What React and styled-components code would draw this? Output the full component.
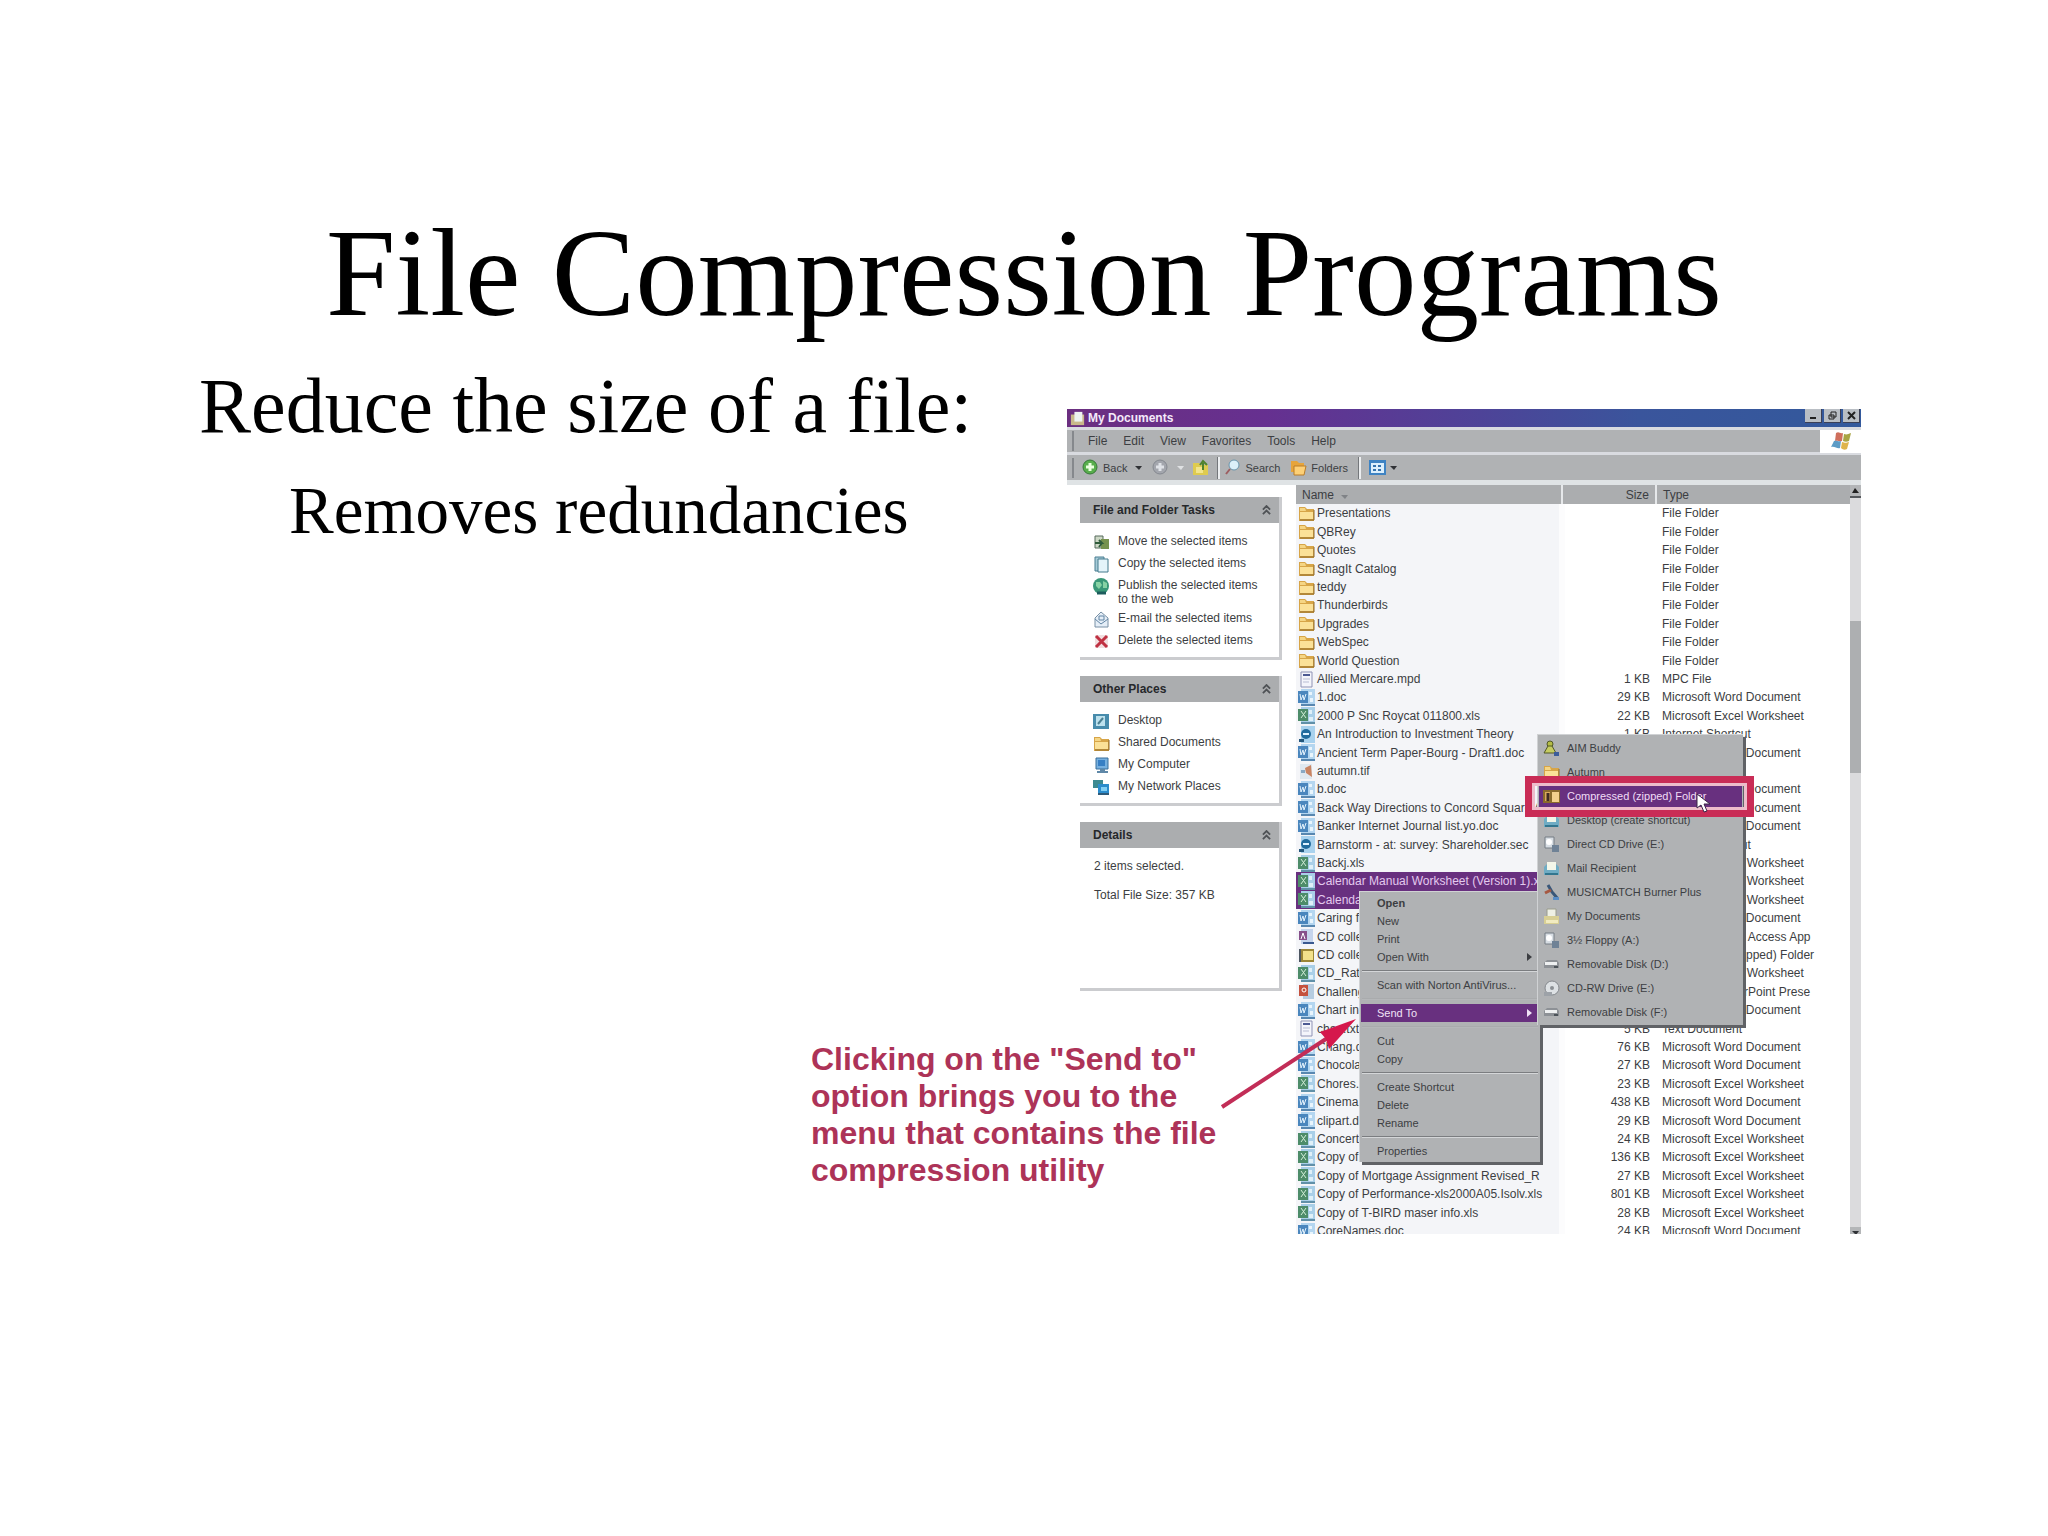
import React from "react";
import styled, { createGlobalStyle, css } from "styled-components";

const GlobalStyle = createGlobalStyle`
  * { box-sizing: border-box; }
  body { margin: 0; background: #fff; color: #000; }
  h1, h2, p, ul { margin: 0; padding: 0; }
  ul { list-style: none; }
  button { margin: 0; padding: 0; border: 0; background: none; font: inherit; color: inherit; text-align: left; }
`;

const sans = `"Liberation Sans", Arial, sans-serif`;

/* ---------- slide ---------- */

const Slide = styled.main`
  min-height: 100vh;
  padding: 204px 0 0;
  font-family: "Liberation Serif", "Times New Roman", serif;
`;

const SlideTitle = styled.h1`
  font-size: 125px;
  line-height: 138px;
  font-weight: 400;
  text-align: center;
`;

const SlideBody = styled.div`
  display: grid;
  grid-template-columns: minmax(0, 868fr) minmax(0, 794fr);
  align-items: start;
  padding: 21px 187px 0 199px;
`;

const Points = styled.ul`
  display: grid;
  gap: 24px;
  white-space: nowrap;
`;

const Point = styled.li`
  font-size: ${(p) => (p.$sub ? 67 : 78)}px;
  line-height: ${(p) => (p.$sub ? 74 : 86)}px;
  padding-left: ${(p) => (p.$sub ? 90 : 0)}px;
`;

const Figure = styled.figure`
  position: relative;
  margin: 46px 0 0;
  font-family: ${sans};
  font-size: 12px;
  line-height: 18px;
  color: #3c3e42;
`;

/* ---------- explorer window ---------- */

const Window = styled.section`
  background: #fff;
`;

const TitleBar = styled.header`
  display: flex;
  align-items: center;
  height: 18px;
  padding-left: 3px;
  gap: 3px;
  color: #f4e9fa;
  background: linear-gradient(90deg, #6b2f80, #663090 25%, #4e4398 52%, #3a559c 72%, #33599c);
`;

const WindowName = styled.h2`
  flex: 1;
  font-size: 12px;
  line-height: 16px;
  font-weight: 700;
`;

const Controls = styled.div`
  display: flex;
  align-self: flex-start;
  gap: 2px;
  padding-right: 1px;
`;

const ControlButton = styled.button`
  display: grid;
  place-items: center;
  width: 17px;
  height: 14px;
  background: #b9bec4;
  border-right: 1px solid #3b3f55;
  border-bottom: 1px solid #3b3f55;
`;

const Bar = styled.div`
  display: flex;
  align-items: center;
  height: ${(p) => p.$height}px;
  padding-left: 5px;
  background: #b0b2b4;
  border-top: 3px solid #d9dbe0;
`;

const Grip = styled.span`
  width: 2px;
  height: 20px;
  margin-right: ${(p) => p.$gap}px;
  background: #85888c;
`;

const MenuBar = styled.nav`
  display: flex;
  flex: 1;
  gap: 16px;
`;

const Flag = styled.div`
  display: grid;
  place-items: center;
  width: 41px;
  height: 23px;
  background: #fff;
`;

const ToolButton = styled.button`
  display: flex;
  align-items: center;
  gap: 4px;
  margin-right: ${(p) => p.$after}px;
  font-size: 11px;
`;

const Divider = styled.span`
  width: 3px;
  height: 22px;
  margin-right: ${(p) => p.$after}px;
  background: #eceef0;
  border-left: 1px solid #74777b;
`;

const Content = styled.div`
  display: grid;
  grid-template-columns: 229px minmax(0, 1fr) 11px;
  height: 754px;
  border-top: 5px solid #dfe3e5;
  overflow: hidden;
`;

/* ---------- task panels ---------- */

const Side = styled.aside`
  display: flex;
  flex-direction: column;
  gap: 16px;
  padding: 12px 14px 0 13px;
`;

const Panel = styled.section`
  border-right: 3px solid #cbcccf;
  border-bottom: 3px solid #cbcccf;
  height: ${(p) => p.$height}px;
  line-height: 14px;
`;

const PanelHead = styled.h2`
  display: flex;
  align-items: center;
  justify-content: space-between;
  height: 26px;
  padding: 0 8px 0 13px;
  background: #abadaf;
  color: #26282b;
  font-size: 12px;
  font-weight: 700;
`;

const TaskList = styled.ul`
  display: grid;
  gap: 5px;
  padding: 11px 16px 0 13px;
`;

const Task = styled.button`
  display: grid;
  grid-template-columns: 17px 1fr;
  gap: 8px;
  align-items: start;
  width: 100%;
`;

const Details = styled.div`
  display: grid;
  gap: 15px;
  padding: 11px 0 0 14px;
`;

/* ---------- file table ---------- */

const FileTable = styled.table`
  width: 100%;
  table-layout: fixed;
  border-collapse: collapse;
  align-self: start;
  white-space: nowrap;
`;

const HeadCell = styled.th`
  height: 19px;
  width: ${(p) => (p.$width ? p.$width + "px" : "auto")};
  padding: 0 6px;
  background: #abadaf;
  border-right: ${(p) => (p.$width ? "2px solid #e6e8ea" : "0")};
  font-weight: 400;
  text-align: ${(p) => (p.$right ? "right" : "left")};
`;

const selectedCell = css`
  background: #68307f;
  color: #e3c9ee;
`;

const Cell = styled.td`
  height: inherit;
  padding: ${(p) => (p.$name ? "0 0 0 2px" : "0 6px")};
  overflow: hidden;
  text-align: ${(p) => (p.$right ? "right" : "left")};
  line-height: 18px;
  ${(p) => p.$name && "background: #f4f5f8; border-right: 6px solid #fcfcfd;"}
  ${(p) => p.$selected && selectedCell}
`;

const FileName = styled.span`
  display: flex;
  align-items: center;
  gap: 2px;
  height: 18px;
`;

const Row = styled.tr`
  height: 18px;
  &:nth-child(5n + 2), &:nth-child(5n + 4) { height: 19px; }
`;

const ScrollBar = styled.div`
  display: flex;
  flex-direction: column;
  justify-content: space-between;
  background: #dbdbdd;
`;

const ScrollButton = styled.button`
  display: grid;
  place-items: center;
  height: 13px;
  background: #b4b6b8;
  border-bottom: 2px solid #55585c;
`;

const Thumb = styled.div`
  height: 152px;
  margin-bottom: 331px;
  background: #adafb1;
`;

/* ---------- pop-up menus ---------- */

const Popup = styled.div`
  position: absolute;
  left: ${(p) => p.$left}px;
  top: ${(p) => p.$top}px;
  width: ${(p) => p.$width}px;
  padding: 2px 1px;
  background: #b0b2b4;
  border-top: 1px solid #d0d2d4;
  border-left: 1px solid #d0d2d4;
  box-shadow: 3px 3px 0 #606266;
`;

const MenuItem = styled.button`
  display: flex;
  align-items: center;
  justify-content: space-between;
  width: 100%;
  height: 18px;
  padding: 0 7px 0 16px;
  font-size: 11px;
  font-weight: ${(p) => (p.$bold ? 700 : 400)};
  ${(p) => p.$selected && "background: #68307f; color: #f0e2f6;"}
`;

const Separator = styled.hr`
  height: 2px;
  margin: 4px 1px;
  border: 0;
  border-top: 1px solid ${(p) => (p.$faint ? "#a9abad" : "#7b7d80")};
  border-bottom: 1px solid ${(p) => (p.$faint ? "#b5b7b9" : "#d4d6d8")};
`;

const TargetList = styled.div`
  display: grid;
  gap: 2px;
`;

const TargetItem = styled.button`
  display: flex;
  align-items: center;
  gap: 7px;
  width: 100%;
  height: 22px;
  padding-left: 4px;
  font-size: 11px;
  ${(p) => p.$selected && "background: #68307f; color: #f0dcf6;"}
`;

const Highlight = styled.div`
  position: absolute;
  left: 458px;
  top: 367px;
  width: 229px;
  height: 41px;
  border: 7px solid #c92c56;
  box-shadow: inset 0 0 0 3px #eebccb;
`;

const Caption = styled.figcaption`
  position: absolute;
  left: -256px;
  top: 632px;
  width: 440px;
  font-size: 32px;
  line-height: 37px;
  font-weight: 700;
  color: #ad3358;
`;

const Arrow = styled.svg`
  position: absolute;
  left: 150px;
  top: 604px;
`;

const Pointer = styled.svg`
  position: absolute;
  left: 629px;
  top: 384px;
`;

/* ---------- drawings ---------- */

const Drawing = styled.svg`
  flex: none;
`;

const Svg = ({ size = 17, children }) => (
  <Drawing width={size} height={size} viewBox="0 0 17 17" aria-hidden="true">{children}</Drawing>
);

const icons = {
  folder: <><path d="M1 2h6l2 2h7v12H1z" fill="#d7a548" /><path d="M2 7h13v7H2z" fill="#fbe198" /><path d="M2 3h5l1 3H2z" fill="#f5d584" /><path d="M2 15h14V5" fill="none" stroke="#8e6b2b" /></>,
  word: <><path d="M3 0h14v17H3z" fill="#b4d6f0" /><path d="M11 3h3v3h-3zM12 9h3v4h-3z" fill="#e9f5fd" /><path d="M0 2h10v12H0z" fill="#4a86bd" /><path d="m2 5 1 6 2-5 1 5 2-6" fill="none" stroke="#e2f1fc" /><path d="M3 16h14" stroke="#5887b0" strokeWidth="2" /></>,
  excel: <><path d="M3 0h14v17H3z" fill="#a9cfe8" /><path d="M11 3h3v4h-3zM11 10h4v4h-4z" fill="#dff0f8" /><path d="M0 2h10v12H0z" fill="#4d8c69" /><path d="m3 4 5 7m0-7-5 7" fill="none" stroke="#d4efd9" /><path d="M3 16h14" stroke="#6090a8" strokeWidth="2" /></>,
  web: <><path d="M3 0h14v17H3z" fill="#a9d2ee" /><circle cx="8" cy="8" r="5" fill="#226c9e" /><path d="M5 8h6" stroke="#dff2ff" strokeWidth="2" /><path d="M1 13h5v3H1z" fill="#24577c" /></>,
  page: <><path d="M3 1h11v15H3z" fill="#f4f5fb" stroke="#8f93b5" /><path d="M5 4h7" stroke="#4d5a93" strokeWidth="2" /><path d="M5 8h7M5 11h6" stroke="#b9bdd3" /></>,
  image: <><path d="M2 1h12v15H2z" fill="#dfe8f0" /><path d="m7 5 6-3 1 12-6-4z" fill="#c98463" /><path d="M3 7h4v3H3z" fill="#89a9c4" /></>,
  access: <><path d="M3 1h12v15H3z" fill="#c5d4ec" /><path d="M1 3h8v9H1z" fill="#87508b" /><path d="m3 11 2-6 2 6" fill="none" stroke="#fff" /><path d="M5 15h11" stroke="#39588f" strokeWidth="2" /></>,
  zip: <><path d="M1 2h15v13H1z" fill="#9b8637" /><path d="M5 4h10v9H5z" fill="#f2e18b" /><path d="M2 2v13" stroke="#4d5661" strokeWidth="2" /></>,
  zipped: <><path d="M0 2h17v13H0z" fill="#8a6a2c" /><path d="M9 4h7v10H9z" fill="#f3cf8c" /><path d="M2 4h5v9H2z" fill="#d9a95c" /><path d="M5 5v8" stroke="#3e2c23" strokeWidth="3" /></>,
  power: <><path d="M5 1h11v15H5z" fill="#b6cce0" /><path d="M1 2h9v11H1z" fill="#c5523e" /><circle cx="6" cy="7" r="2" fill="none" stroke="#fff" /></>,
  move: <><path d="M2 2h8v12H2z" fill="#cdd8c6" stroke="#566b5d" /><path d="M8 5h8v10H8z" fill="#76924d" /><path d="M2 9h7l-3-3m3 3-3 4" fill="none" stroke="#315d3c" strokeWidth="2" /></>,
  copy: <><path d="M2 1h9v14H2z" fill="#a7cbd8" stroke="#4a7f92" /><path d="M5 3h10v13H5z" fill="#e4f4fa" stroke="#447b8d" /></>,
  globe: <><circle cx="8" cy="8" r="8" fill="#399777" /><path d="M3 4h4l2 3-3 4-3-3zM10 3l4 2v5h-4z" fill="#87d2a4" /><path d="M4 15h9" stroke="#1d5c5d" strokeWidth="3" /></>,
  mail: <><path d="m2 7 6-6 7 6v9H2z" fill="#e5eef7" stroke="#7890a5" /><path d="m2 8 6 5 7-5M6 5h5v4H6z" fill="none" stroke="#6285a4" /></>,
  remove: <><path d="M2 2h13v13H2z" fill="#f1dfe0" /><path d="m3 3 11 11m0-11L3 14" stroke="#bf3142" strokeWidth="3" /></>,
  desktop: <><path d="M0 1h16v15H0z" fill="#488cac" /><path d="M3 3h9v10H3z" fill="#bde1ed" /><path d="m5 11 5-6" stroke="#4b8092" strokeWidth="2" /></>,
  computer: <><path d="M3 1h12v11H3z" fill="#77b0df" stroke="#386f9b" /><path d="M5 3h7v6H5z" fill="#377fc4" /><path d="M7 12h5v2h3v2H4v-2h3z" fill="#5f88a8" /></>,
  network: <><path d="M0 1h10v8H0z" fill="#3d8a91" /><path d="M5 5h11v9H5z" fill="#2b8ccc" /><path d="M8 8h6v4H8z" fill="#82cff3" /><path d="M5 15h11" stroke="#2e5a79" strokeWidth="2" /></>,
  buddy: <><circle cx="7" cy="4" r="3" fill="#b5bd45" stroke="#515828" /><path d="m1 13 4-7h4l4 7z" fill="#c6cc62" stroke="#515828" /><path d="M11 12h5v4h-5z" fill="#3c5d9b" /></>,
  docs: <><path d="M4 1h9v9H4z" fill="#eef0e4" stroke="#9a9c8c" /><path d="M1 8h15v8H1z" fill="#d8cf94" /><path d="M3 12h12v3H3z" fill="#f1ebc0" /></>,
  drive: <><path d="M1 7 4 4h10l2 3v5H1z" fill="#8d9196" /><path d="M2 6h12v3H2z" fill="#eef0f1" /><path d="M11 11h4" stroke="#4c5359" strokeWidth="2" /></>,
  disc: <><circle cx="9" cy="8" r="7" fill="#dde1e4" stroke="#84888d" /><circle cx="9" cy="8" r="2" fill="#8b8f94" /><path d="M1 12h8v4H1z" fill="#9da2a8" /></>,
  cd: <><path d="M2 1h9v11H2z" fill="#d7dde3" stroke="#757c84" /><circle cx="6" cy="6" r="3" fill="#fff" /><path d="M9 9h7v7H9z" fill="#6f8296" /></>,
  tray: <><path d="m1 7 4-4h7l4 4v8H1z" fill="#6facc4" /><path d="M4 2h9v8H4z" fill="#f3f6e9" /><path d="M2 14h13" stroke="#32768f" strokeWidth="2" /></>,
  burner: <><path d="m5 1 4 7 6 7" fill="none" stroke="#395779" strokeWidth="3" /><path d="m2 9 6-3" stroke="#a65942" strokeWidth="3" /><path d="M10 13h6v3h-6z" fill="#598dc6" /></>,
  back: <><circle cx="8" cy="8" r="7" fill="#58ae4c" stroke="#38783a" /><path d="M8 4v8M4 8h8" stroke="#eaffdf" strokeWidth="3" /></>,
  forward: <><circle cx="8" cy="8" r="7" fill="#a3a6ad" stroke="#858990" /><path d="M8 4v8M4 8h8" stroke="#dfe2e7" strokeWidth="3" /></>,
  up: <><path d="M1 4h6l2 2h7v10H1z" fill="#dfcb4f" /><path d="M4 8h7v6H4z" fill="#f2e58c" /><path d="M11 11V4M8 6l3-4 4 4" fill="none" stroke="#50832c" strokeWidth="2" /></>,
  search: <><circle cx="10" cy="6" r="5" fill="#dcf0fa" stroke="#6a95ad" /><path d="m6 10-4 5" stroke="#9d5d60" strokeWidth="2" /></>,
  folders: <><path d="M1 2h6l2 2h5v9H1z" fill="#e6a43b" /><path d="M4 7h12l-2 9H4z" fill="#fdd077" stroke="#ba7d28" /></>,
  views: <><path d="M0 1h17v15H0z" fill="#3e83c3" /><path d="M2 4h13v10H2z" fill="#dceffc" /><path d="M4 6h3v2H4zM9 6h3v2H9zM4 10h3v2H4zM9 10h3v2H9z" fill="#3572ad" /></>,
};

const Icon = ({ name }) => <Svg>{icons[name]}</Svg>;

const Caret = ({ color = "#303236" }) => (
  <svg width="7" height="4" viewBox="0 0 7 4" aria-hidden="true"><path d="M0 0h7L4 4z" fill={color} /></svg>
);

const SubArrow = () => (
  <svg width="5" height="8" viewBox="0 0 5 8" aria-hidden="true"><path d="m0 0 5 4-5 4z" fill="currentColor" /></svg>
);

const Chevron = () => (
  <svg width="9" height="11" viewBox="0 0 10 12" aria-hidden="true">
    <path d="m1 5 4-4 4 4M1 10l4-4 4 4" fill="none" stroke="#4f5256" strokeWidth="2" />
  </svg>
);

/* ---------- data ---------- */

const W = "Microsoft Word Document";
const X = "Microsoft Excel Worksheet";
const F = "File Folder";

const files = [
  ["folder", "Presentations", "", F],
  ["folder", "QBRey", "", F],
  ["folder", "Quotes", "", F],
  ["folder", "SnagIt Catalog", "", F],
  ["folder", "teddy", "", F],
  ["folder", "Thunderbirds", "", F],
  ["folder", "Upgrades", "", F],
  ["folder", "WebSpec", "", F],
  ["folder", "World Question", "", F],
  ["page", "Allied Mercare.mpd", "1 KB", "MPC File"],
  ["word", "1.doc", "29 KB", W],
  ["excel", "2000 P Snc Roycat 011800.xls", "22 KB", X],
  ["web", "An Introduction to Investment Theory", "1 KB", "Internet Shortcut"],
  ["word", "Ancient Term Paper-Bourg - Draft1.doc", "31 KB", W],
  ["image", "autumn.tif", "4 KB", "TIF Image"],
  ["word", "b.doc", "24 KB", W],
  ["word", "Back Way Directions to Concord Square A", "20 KB", W],
  ["word", "Banker Internet Journal list.yo.doc", "36 KB", W],
  ["web", "Barnstorm - at: survey: Shareholder.sec", "1 KB", "Internet Shortcut"],
  ["excel", "Backj.xls", "18 KB", X],
  ["excel", "Calendar Manual Worksheet (Version 1).xls", "24 KB", X, true],
  ["excel", "Calendar.xls", "33 KB", X, true],
  ["word", "Caring for.doc", "25 KB", W],
  ["access", "CD collection.mdb", "96 KB", "Microsoft Office Access App"],
  ["zip", "CD collection.zip", "12 KB", "Compressed (zipped) Folder"],
  ["excel", "CD_Rates.xls", "18 KB", X],
  ["power", "Challenge.ppt", "44 KB", "Microsoft PowerPoint Prese"],
  ["word", "Chart in.doc", "26 KB", W],
  ["page", "chan.txt", "5 KB", "Text Document"],
  ["word", "Chang.doc", "76 KB", W],
  ["word", "Chocolate.doc", "27 KB", W],
  ["excel", "Chores.xls", "23 KB", X],
  ["word", "Cinema.doc", "438 KB", W],
  ["word", "clipart.doc", "29 KB", W],
  ["excel", "Concert.xls", "24 KB", X],
  ["excel", "Copy of.xls", "136 KB", X],
  ["excel", "Copy of Mortgage Assignment Revised_R", "27 KB", X],
  ["excel", "Copy of Performance-xls2000A05.Isolv.xls", "801 KB", X],
  ["excel", "Copy of T-BIRD maser info.xls", "28 KB", X],
  ["word", "CoreNames.doc", "24 KB", W],
];

const tasks = [
  ["move", "Move the selected items"],
  ["copy", "Copy the selected items"],
  ["globe", "Publish the selected items to the web"],
  ["mail", "E-mail the selected items"],
  ["remove", "Delete the selected items"],
];

const places = [
  ["desktop", "Desktop"],
  ["folder", "Shared Documents"],
  ["computer", "My Computer"],
  ["network", "My Network Places"],
];

const targets = [
  ["buddy", "AIM Buddy"],
  ["folder", "Autumn"],
  ["zipped", "Compressed (zipped) Folder"],
  ["tray", "Desktop (create shortcut)"],
  ["cd", "Direct CD Drive (E:)"],
  ["tray", "Mail Recipient"],
  ["burner", "MUSICMATCH Burner Plus"],
  ["docs", "My Documents"],
  ["cd", "3½ Floppy (A:)"],
  ["drive", "Removable Disk (D:)"],
  ["disc", "CD-RW Drive (E:)"],
  ["drive", "Removable Disk (F:)"],
];

const TaskPanel = ({ title, height, items, children }) => (
  <Panel $height={height}>
    <PanelHead>{title}<Chevron /></PanelHead>
    {items ? (
      <TaskList>
        {items.map(([icon, label]) => (
          <li key={label}><Task type="button"><Icon name={icon} /><span>{label}</span></Task></li>
        ))}
      </TaskList>
    ) : children}
  </Panel>
);

const Explorer = () => (
  <Window aria-label="My Documents">
    <TitleBar>
      <Svg size={15}><path d="M1 4h15v12H1z" fill="#c9b98b" /><path d="M5 1h9v11H5z" fill="#edf3f1" /></Svg>
      <WindowName>My Documents</WindowName>
      <Controls>
        <ControlButton type="button" aria-label="Minimize"><svg width="9" height="9"><path d="M1 7h6" stroke="#222" strokeWidth="2" /></svg></ControlButton>
        <ControlButton type="button" aria-label="Restore"><svg width="9" height="9"><path d="M3 1h5v5H3zM1 4h5v4H1z" fill="none" stroke="#222" /></svg></ControlButton>
        <ControlButton type="button" aria-label="Close"><svg width="9" height="9"><path d="m1 1 7 7m0-7L1 8" stroke="#222" strokeWidth="2" /></svg></ControlButton>
      </Controls>
    </TitleBar>
    <Bar $height={25}>
      <Grip $gap={14} />
      <MenuBar>
        {["File", "Edit", "View", "Favorites", "Tools", "Help"].map((m) => <button type="button" key={m}>{m}</button>)}
      </MenuBar>
      <Flag>
        <svg width="22" height="20" viewBox="0 0 22 20" aria-hidden="true">
          <path d="M6 2c3-2 4 1 7 0l-1 8c-3 1-4-1-7 0z" fill="#cf6f5c" />
          <path d="M14 3c3 1 4 0 7-1l-2 8c-2 1-4 1-6 0z" fill="#a9a544" />
          <path d="M4 10c3-1 4 1 7 0l-1 7c-3 1-5-2-9-1z" fill="#5d9cc6" />
          <path d="M12 11c3 1 4 1 7 0l-2 7c-2 1-4 1-6-1z" fill="#dfb44c" />
        </svg>
      </Flag>
    </Bar>
    <Bar $height={28}>
      <Grip $gap={8} />
      <ToolButton type="button" $after={8}><Icon name="back" />Back</ToolButton>
      <ToolButton type="button" $after={10} aria-label="Back history"><Caret /></ToolButton>
      <ToolButton type="button" $after={8} aria-label="Forward"><Icon name="forward" /></ToolButton>
      <ToolButton type="button" $after={8} aria-label="Forward history"><Caret color="#dfe1e3" /></ToolButton>
      <ToolButton type="button" $after={8} aria-label="Up"><Icon name="up" /></ToolButton>
      <Divider $after={4} />
      <ToolButton type="button" $after={10}><Icon name="search" />Search</ToolButton>
      <ToolButton type="button" $after={10}><Icon name="folders" />Folders</ToolButton>
      <Divider $after={8} />
      <ToolButton type="button" $after={0} aria-label="Views"><Icon name="views" /><Caret /></ToolButton>
    </Bar>
    <Content>
      <Side>
        <TaskPanel title="File and Folder Tasks" height={163} items={tasks} />
        <TaskPanel title="Other Places" height={130} items={places} />
        <TaskPanel title="Details" height={169}>
          <Details>
            <p>2 items selected.</p>
            <p>Total File Size: 357 KB</p>
          </Details>
        </TaskPanel>
      </Side>
      <FileTable>
        <thead>
          <tr>
            <HeadCell $width={266}>Name &nbsp;<Caret color="#808387" /></HeadCell>
            <HeadCell $width={94} $right>Size</HeadCell>
            <HeadCell>Type</HeadCell>
          </tr>
        </thead>
        <tbody>
          {files.map(([icon, name, size, type, selected], i) => (
            <Row key={i}>
              <Cell $name $selected={selected}><FileName><Icon name={icon} />{name}</FileName></Cell>
              <Cell $right>{size}</Cell>
              <Cell>{type}</Cell>
            </Row>
          ))}
        </tbody>
      </FileTable>
      <ScrollBar>
        <ScrollButton type="button" aria-label="Scroll up"><svg width="7" height="5"><path d="M0 5h7L3 0z" fill="#222" /></svg></ScrollButton>
        <Thumb />
        <ScrollButton type="button" aria-label="Scroll down"><Caret /></ScrollButton>
      </ScrollBar>
    </Content>
  </Window>
);

const ContextMenu = () => (
  <Popup $left={292} $top={482} $width={181}>
    <MenuItem type="button" $bold>Open</MenuItem>
    <MenuItem type="button">New</MenuItem>
    <MenuItem type="button">Print</MenuItem>
    <MenuItem type="button">Open With<SubArrow /></MenuItem>
    <Separator />
    <MenuItem type="button">Scan with Norton AntiVirus...</MenuItem>
    <Separator $faint />
    <MenuItem type="button" $selected>Send To<SubArrow /></MenuItem>
    <Separator $faint />
    <MenuItem type="button">Cut</MenuItem>
    <MenuItem type="button">Copy</MenuItem>
    <Separator />
    <MenuItem type="button">Create Shortcut</MenuItem>
    <MenuItem type="button">Delete</MenuItem>
    <MenuItem type="button">Rename</MenuItem>
    <Separator />
    <MenuItem type="button">Properties</MenuItem>
  </Popup>
);

const SendToMenu = () => (
  <Popup $left={470} $top={325} $width={206}>
    <TargetList>
      {targets.map(([icon, label], i) => (
        <TargetItem type="button" key={i} $selected={i === 2}><Icon name={icon} />{label}</TargetItem>
      ))}
    </TargetList>
  </Popup>
);

export default function App() {
  return (
    <>
      <GlobalStyle />
      <Slide>
        <SlideTitle>File Compression Programs</SlideTitle>
        <SlideBody>
          <Points>
            <Point>Reduce the size of a file:</Point>
            <Point $sub>Removes redundancies</Point>
          </Points>
          <Figure>
            <Explorer />
            <ContextMenu />
            <SendToMenu />
            <Highlight />
            <Pointer width="16" height="20" viewBox="0 0 16 20" aria-hidden="true">
              <path d="M1 1v14l4-3 3 7 3-1-3-7h6z" fill="#fff" stroke="#3c2648" />
            </Pointer>
            <Caption>
              Clicking on the "Send to"<br />
              option brings you to the<br />
              menu that contains the file<br />
              compression utility
            </Caption>
            <Arrow width="144" height="100" viewBox="0 0 144 100" aria-hidden="true">
              <path d="M5 94 112 24" stroke="#c22d57" strokeWidth="4" />
              <path d="m139 6-36 13 6 7 3 10z" fill="#d5184c" />
            </Arrow>
          </Figure>
        </SlideBody>
      </Slide>
    </>
  );
}
